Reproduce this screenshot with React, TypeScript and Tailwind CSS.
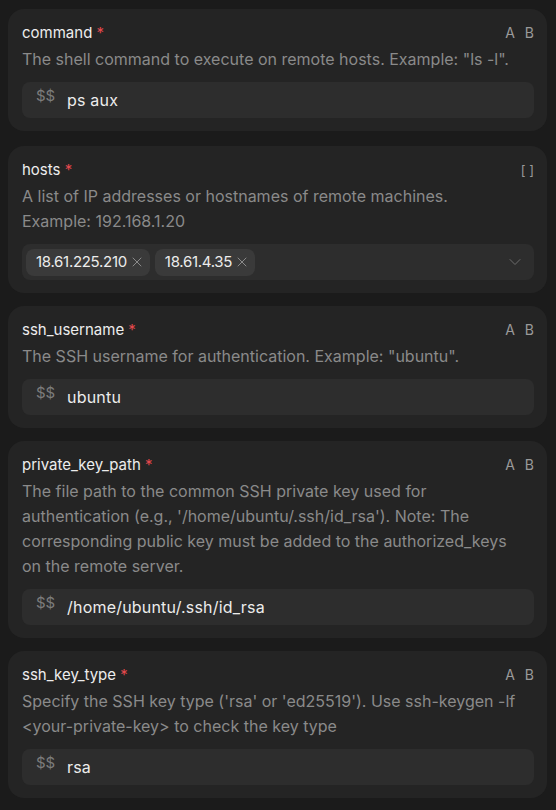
import { X, ChevronDown } from "lucide-react";

type Field = {
  name: string;
  lines: string[];
  kind: "text" | "list";
  value?: string;
  tags?: string[];
};

const fields: Field[] = [
  {
    name: "command",
    lines: ['The shell command to execute on remote hosts. Example: "ls -l".'],
    kind: "text",
    value: "ps aux",
  },
  {
    name: "hosts",
    lines: [
      "A list of IP addresses or hostnames of remote machines.",
      "Example: 192.168.1.20",
    ],
    kind: "list",
    tags: ["18.61.225.210", "18.61.4.35"],
  },
  {
    name: "ssh_username",
    lines: ['The SSH username for authentication. Example: "ubuntu".'],
    kind: "text",
    value: "ubuntu",
  },
  {
    name: "private_key_path",
    lines: [
      "The file path to the common SSH private key used for",
      "authentication (e.g., '/home/ubuntu/.ssh/id_rsa'). Note: The",
      "corresponding public key must be added to the authorized_keys",
      "on the remote server.",
    ],
    kind: "text",
    value: "/home/ubuntu/.ssh/id_rsa",
  },
  {
    name: "ssh_key_type",
    lines: [
      "Specify the SSH key type ('rsa' or 'ed25519'). Use ssh-keygen -lf",
      "<your-private-key> to check the key type",
    ],
    kind: "text",
    value: "rsa",
  },
];

const FieldCard = ({ field }: { field: Field }) => {
  return (
    <div className="rounded-2xl bg-[#242424] pl-3.5 pr-[13px] pt-4 pb-[13px] first:mb-0.5">
      <div className="flex items-center justify-between h-4">
        <div className="text-[15px] text-[#ededed] leading-4">
          {field.name} <span className="text-[#e5484d]">*</span>
        </div>
        {field.kind === "text" ? (
          <div className="flex gap-[10px] text-[14px] text-[#9a9a9a] leading-4">
            <span>A</span>
            <span>B</span>
          </div>
        ) : (
          <div className="text-[13px] text-[#9a9a9a] leading-4 whitespace-pre">[ ]</div>
        )}
      </div>
      <p className="mt-1.5 text-[16px] leading-[25px] text-[#8a8a8a]">
        {field.lines.map((l, i) => (
          <span key={i} className="block whitespace-nowrap">
            {l}
          </span>
        ))}
      </p>
      {field.kind === "text" ? (
        <div className="mt-2.5 flex h-9 items-center rounded-lg bg-[#2d2d2d] pl-3.5">
          <span className="text-[15px] text-[#7c7c7c] -translate-y-1 w-[31px]">$$</span>
          <span className="text-[16px] tracking-[0.2px] text-[#ececec]">{field.value}</span>
        </div>
      ) : (
        <div className="mt-2.5 flex h-9 items-center rounded-lg bg-[#2d2d2d] pl-1 pr-[9px]">
          <div className="flex flex-1 gap-[5px]">
            {field.tags?.map((t) => (
              <div
                key={t}
                className="flex h-[27px] items-center gap-0.5 rounded-lg bg-[#3a3a3a] pl-2.5 pr-[5px]"
              >
                <span className="text-[15px] tracking-[-0.3px] text-[#ececec]">{t}</span>
                <X size={16} strokeWidth={1.5} className="text-[#8a8a8a]" />
              </div>
            ))}
          </div>
          <ChevronDown size={20} strokeWidth={1.2} className="text-[#6c6c6c]" />
        </div>
      )}
    </div>
  );
};

export default function App() {
  return (
    <div
      className="min-h-[810px] bg-[#1b1b1b] pl-2 pr-[9px] pt-[9px] pb-3 flex flex-col gap-[13px]"
      style={{ fontFamily: 'Inter, "Noto Sans", sans-serif' }}
    >
      {fields.map((f) => (
        <FieldCard key={f.name} field={f} />
      ))}
    </div>
  );
}
